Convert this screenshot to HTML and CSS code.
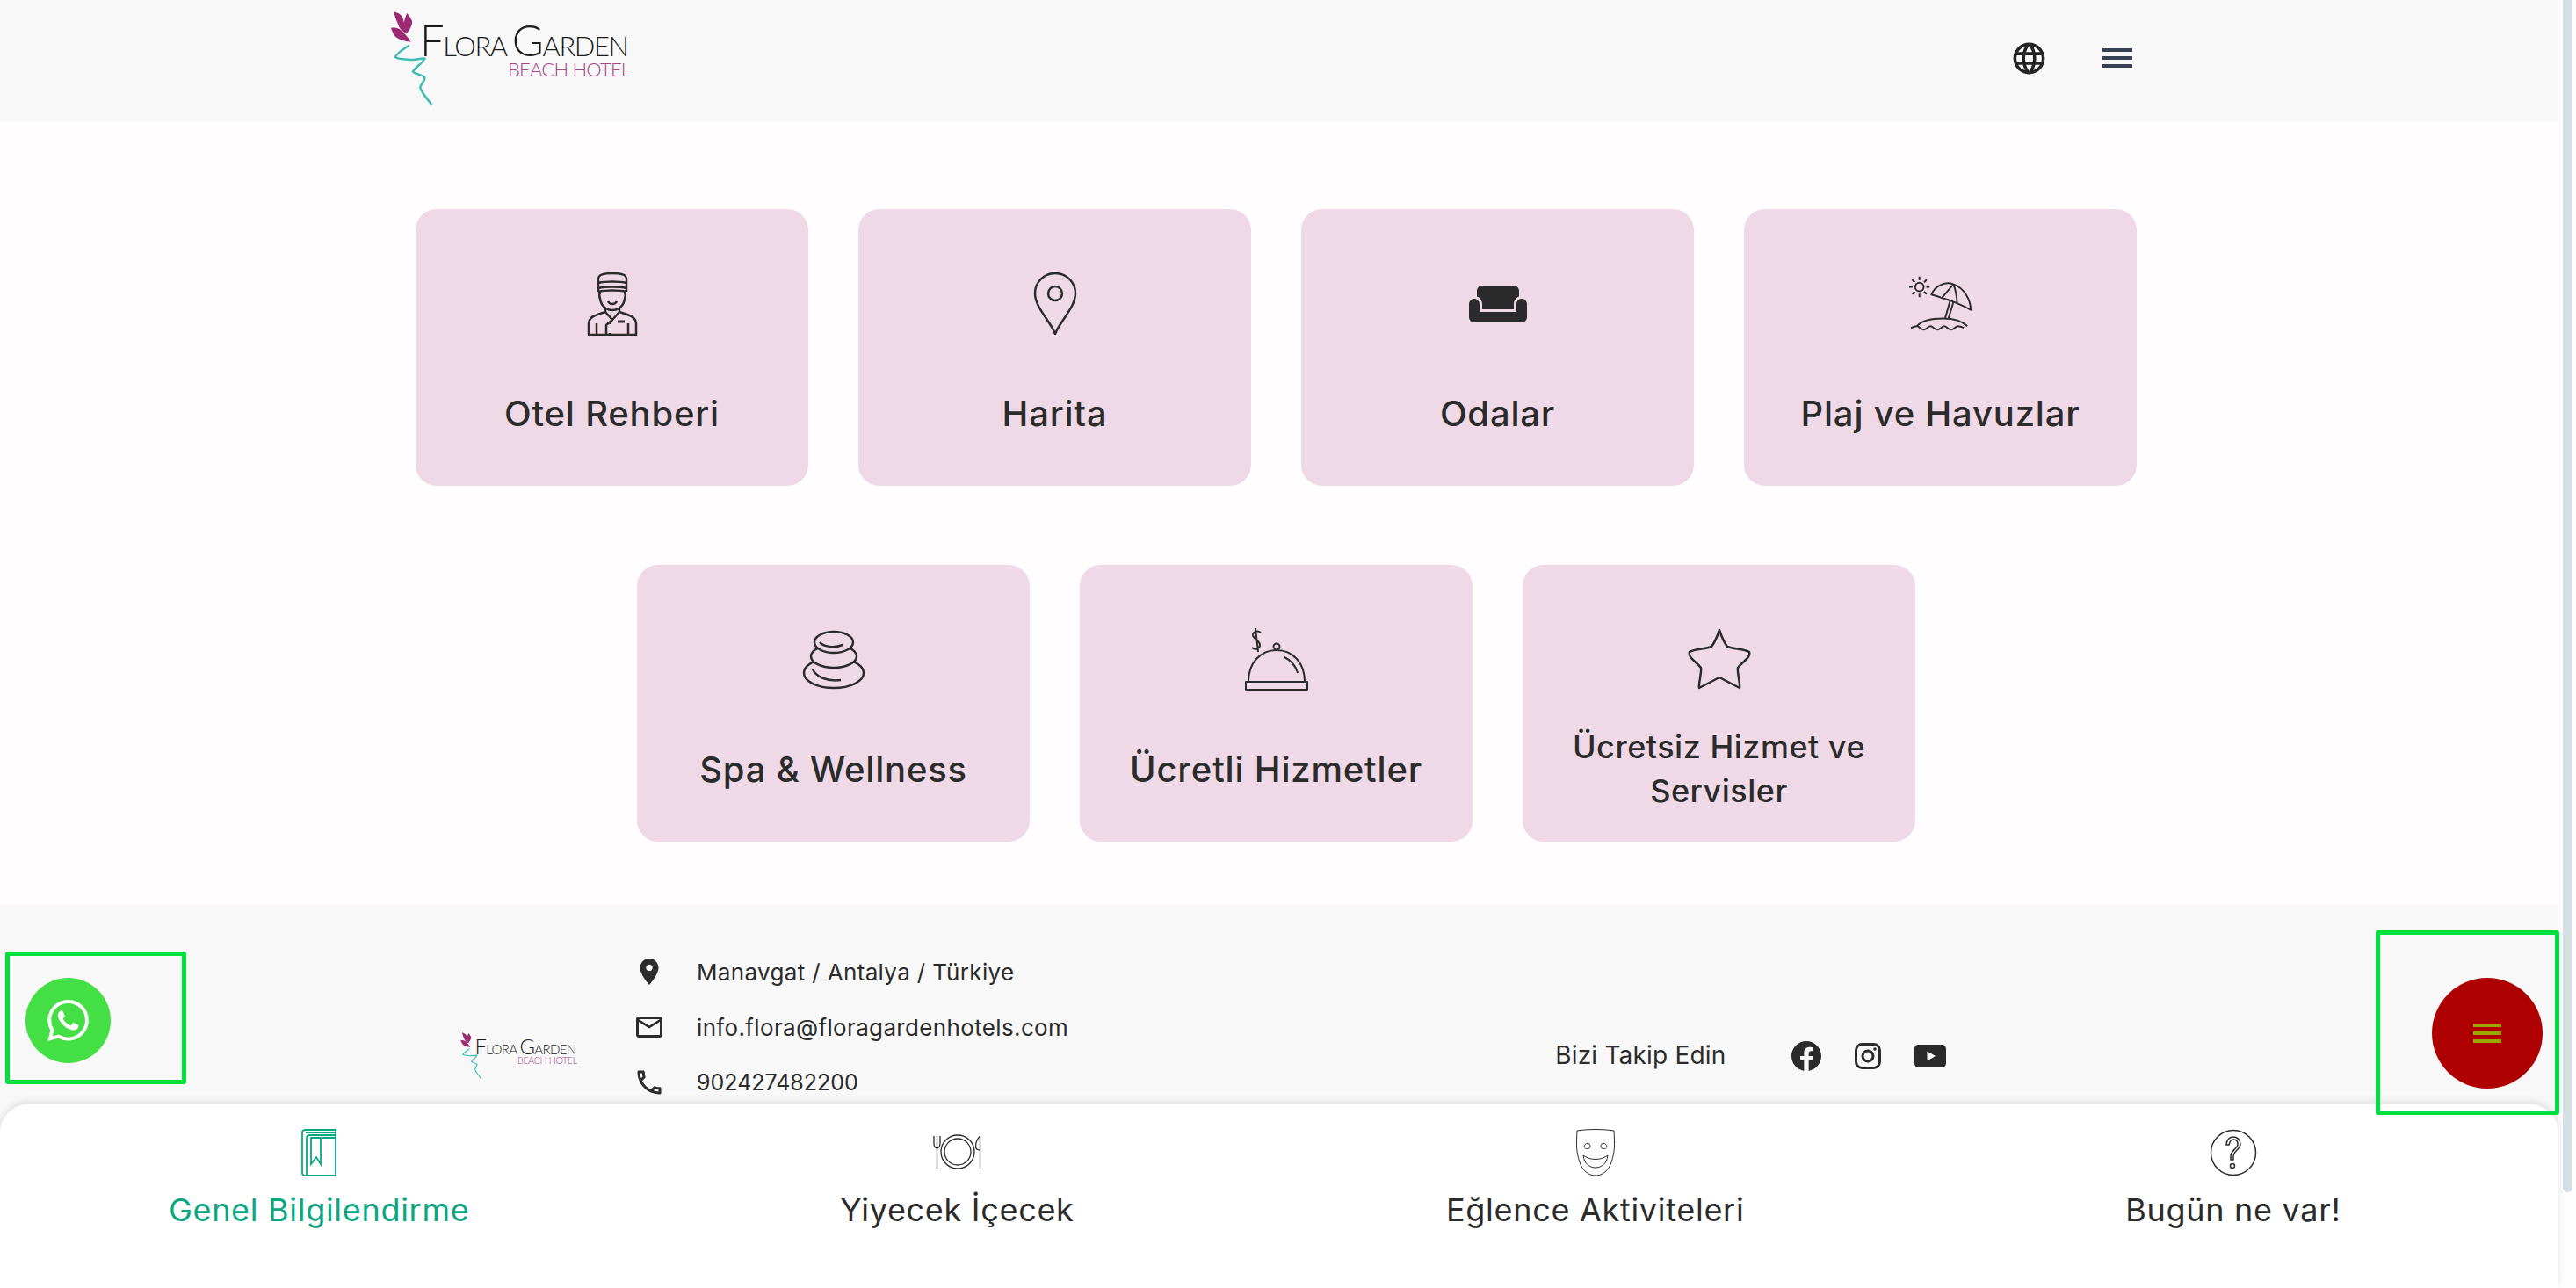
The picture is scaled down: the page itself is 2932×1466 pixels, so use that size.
FILE: index.html
```html
<!DOCTYPE html>
<html lang="tr">
<head>
  <meta charset="UTF-8" />
  <meta name="viewport" content="width=device-width, initial-scale=1.0" />
  <title>Flora Garden Beach Hotel</title>
  <link rel="stylesheet" href="styles.css">
</head>
<body>
  <div class="page">

    <header class="topbar">
      <svg class="logo" viewBox="0 0 274 107">
        <path class="logo-leaf" d="M3.3 .3C9 2 12 4 13.3 7c2 6 3 12 5 18.3C13 23 10 20 8.3 15.3 6 10 4 5 3.3 .3z"/>
        <path class="logo-leaf" d="M18.3 2c2.5 3 5 6 6 10-.5 5-3 9-6 12.7-2-4-3.300-8-3.300-12.700 .5-4 2-7 3.300-10z"/>
        <path class="logo-leaf" d="M0 18.700c4-.5 7 0 10 1.600 5 3.500 9 9 12.700 14.400C15 34 9 32 5 28.700 2.500 26 1 22 0 18.700z"/>
        <path class="logo-wave" d="M20.700 38.700C14 43 7 47 5 52c4 3 12 2 16.700 3 7 0 13-2 16.600-1.300-3 6-11 10-13.300 15 3 3 11 3 13.300 6.300 1 4-5 8-5 11.700 2 7 9 14 13.400 20"/>
        <text class="logo-name" x="33" y="50.500" textLength="238">F<tspan class="logo-small">LORA </tspan>G<tspan class="logo-small">ARDEN</tspan></text>
        <text class="logo-sub" x="133" y="74" textLength="140">BEACH HOTEL</text>
      </svg>
      <div class="topbar-actions">
        <svg class="globe-icon" viewBox="0 0 24 24"><path d="M11.990 2C6.470 2 2 6.480 2 12s4.470 10 9.990 10C17.520 22 22 17.520 22 12S17.520 2 11.990 2zm6.930 6h-2.950c-.32-1.250-.78-2.450-1.380-3.560 1.840.63 3.370 1.910 4.330 3.560zM12 4.040c.83 1.200 1.480 2.530 1.910 3.960h-3.820c.43-1.430 1.080-2.760 1.910-3.960zM4.260 14C4.100 13.360 4 12.690 4 12s.1-1.360.26-2h3.380c-.08.66-.14 1.320-.14 2 0 .68.06 1.340.14 2H4.260zm.82 2h2.950c.32 1.250.78 2.450 1.380 3.560-1.840-.63-3.370-1.900-4.330-3.560zm2.950-8H5.080c.96-1.660 2.490-2.930 4.330-3.560C8.810 5.550 8.350 6.750 8.030 8zM12 19.960c-.83-1.200-1.480-2.530-1.910-3.960h3.820c-.43 1.430-1.080 2.760-1.910 3.960zM14.340 14H9.660c-.09-.66-.16-1.320-.16-2 0-.68.07-1.350.16-2h4.680c.09.65.16 1.320.16 2 0 .68-.07 1.340-.16 2zm.25 5.560c.6-1.110 1.060-2.310 1.380-3.560h2.950c-.96 1.650-2.490 2.930-4.330 3.560zM16.360 14c.08-.66.14-1.320.14-2 0-.68-.06-1.340-.14-2h3.380c.16.64.26 1.310.26 2s-.1 1.360-.26 2h-3.380z"/></svg>
        <div class="burger"><span></span><span></span><span></span></div>
      </div>
    </header>

    <main class="cards">
      <div class="card-row">
        <a class="card">
          <svg class="card-icon line-icon" viewBox="0 0 56 72">
            <path d="M12 22V7c0-4 6-6 16-6s16 2 16 6v15M12 12c8-2 24-2 32 0M12 18c8-2 24-2 32 0M12 22c8-2 24-2 32 0"/>
            <path d="M14 22c-1 3-1 6 0 8 1 8 7 13 14 13s13-5 14-13c1-2 1-5 0-8M23 33c2 4 8 4 10 0"/>
            <path d="M20 41v4l8 9 8-9v-4M20 45l-9 3c-6 2-10 5-10 10v13h54V58c0-5-4-8-10-10l-9-3M10 58v13M46 58v13M28 54l-7 6v11"/>
            <path d="M34 56h8" stroke-width="3"/>
            <path d="M25 58v1M25 64v1M25 69v1" stroke-width="2.500"/>
          </svg>
          <span class="card-label">Otel Rehberi</span>
        </a>
        <a class="card">
          <svg class="card-icon line-icon" viewBox="0 0 50 72">
            <path d="M25 70C20 56 2 40 2 24a23 23 0 0 1 46 0c0 16-18 32-23 46z"/>
            <circle cx="25" cy="24" r="8"/>
          </svg>
          <span class="card-label">Harita</span>
        </a>
        <a class="card">
          <svg class="card-icon fill-icon" viewBox="0 0 24 24"><path d="M21 10c-1.100 0-2 .9-2 2v3H5v-3c0-1.100-.9-2-2-2s-2 .9-2 2v5c0 1.100.9 2 2 2h18c1.100 0 2-.9 2-2v-5c0-1.100-.9-2-2-2zm-3-5H6c-1.100 0-2 .9-2 2v2.150c1.160.41 2 1.520 2 2.810V14h12v-2.040c0-1.290.84-2.400 2-2.810V7c0-1.100-.9-2-2-2z"/></svg>
          <span class="card-label">Odalar</span>
        </a>
        <a class="card">
          <svg class="card-icon line-icon thin" viewBox="0 0 74 66">
            <circle cx="12" cy="13" r="5"/>
            <path d="M12 1v4M12 21v4M0 13h4M20 13h4M3.500 4.500l3 3M17.500 18.500l3 3M3.500 21.500l3-3M17.500 7.500l3-3"/>
            <path d="M26 22C30 12 42 6 52 10c12 4 20 18 20 30-6-4-12-6-16-8-6-2-14-6-18-6-4-2-8-3-12-4z"/>
            <path d="M52 10c-6 6-10 12-14 16M52 10c2 6 4 14 4 22"/>
            <path d="M48 29l-6 21M52 30l-6 20"/>
            <path d="M9 59c5-6 17-9 31-9 12 0 22 3 28 9"/>
            <path d="M2 61c3-1 5-2 7-2 3 0 4 4 8 4s5-4 8-4 4 4 8 4 5-4 8-4 4 4 8 4 5-4 8-4c2 0 5 1 7 2"/>
          </svg>
          <span class="card-label">Plaj ve Havuzlar</span>
        </a>
      </div>
      <div class="card-row">
        <a class="card">
          <svg class="card-icon line-icon stones" viewBox="0 0 72 66">
            <ellipse cx="36" cy="48" rx="34" ry="17"/>
            <path d="M12 44c4 8 16 14 32 12"/>
            <ellipse cx="36" cy="29" rx="26" ry="13"/>
            <ellipse cx="36" cy="13" rx="22" ry="12"/>
            <path d="M20 13c4 5 16 7 26 3"/>
          </svg>
          <span class="card-label">Spa &amp; Wellness</span>
        </a>
        <a class="card">
          <svg class="card-icon line-icon thin" viewBox="0 0 72 72">
            <path d="M1 61h70v9H1z"/>
            <path d="M4 61c0-22 14-36 32-36s32 14 32 36"/>
            <circle cx="36" cy="21" r="3.500"/>
            <path d="M45 33c8 4 13 11 15 18"/>
            <path d="M18 5c-4-3-9-1-9 3s8 6 8 11-6 6-9 3M12 0l3 27"/>
          </svg>
          <span class="card-label">Ücretli Hizmetler</span>
        </a>
        <a class="card">
          <svg class="card-icon line-icon" viewBox="0 0 72 72">
            <path d="M36 2C38 8 41 16 45 21 52 24 64 23 70 27 72 34 62 38 57 45 56 52 60 62 59 68 53 65 42 59 36 56 30 59 19 65 13 68 12 62 16 52 15 45 10 38 0 34 2 27 8 23 20 24 27 21 31 16 34 8 36 2z"/>
          </svg>
          <span class="card-label small">Ücretsiz Hizmet ve Servisler</span>
        </a>
      </div>
    </main>

    <footer class="site-footer">
      <svg class="logo footer-logo" viewBox="0 0 274 107">
        <path class="logo-leaf" d="M3.300 .3C9 2 12 4 13.300 7c2 6 3 12 5 18.300C13 23 10 20 8.300 15.300 6 10 4 5 3.300 .3z"/>
        <path class="logo-leaf" d="M18.300 2c2.500 3 5 6 6 10-.5 5-3 9-6 12.700-2-4-3.300-8-3.300-12.700 .5-4 2-7 3.300-10z"/>
        <path class="logo-leaf" d="M0 18.700c4-.5 7 0 10 1.600 5 3.500 9 9 12.700 14.400C15 34 9 32 5 28.700 2.500 26 1 22 0 18.700z"/>
        <path class="logo-wave" d="M20.700 38.700C14 43 7 47 5 52c4 3 12 2 16.700 3 7 0 13-2 16.600-1.300-3 6-11 10-13.300 15 3 3 11 3 13.300 6.300 1 4-5 8-5 11.700 2 7 9 14 13.400 20"/>
        <text class="logo-name" x="33" y="50.500" textLength="238">F<tspan class="logo-small">LORA </tspan>G<tspan class="logo-small">ARDEN</tspan></text>
        <text class="logo-sub" x="133" y="74" textLength="140">BEACH HOTEL</text>
      </svg>

      <div class="contact">
        <div class="contact-row">
          <svg viewBox="0 0 24 24"><path d="M12 2C8.130 2 5 5.130 5 9c0 5.250 7 13 7 13s7-7.750 7-13c0-3.870-3.130-7-7-7zm0 9.500c-1.380 0-2.500-1.120-2.500-2.500s1.120-2.500 2.500-2.500 2.500 1.120 2.500 2.500-1.120 2.500-2.500 2.500z"/></svg>
          <span>Manavgat / Antalya / Türkiye</span>
        </div>
        <div class="contact-row">
          <svg viewBox="0 0 24 24"><path d="M20 4H4c-1.100 0-1.990.9-1.990 2L2 18c0 1.100.9 2 2 2h16c1.100 0 2-.9 2-2V6c0-1.100-.9-2-2-2zm0 14H4V8l8 5 8-5v10zm-8-7L4 6h16l-8 5z"/></svg>
          <span>info.flora@floragardenhotels.com</span>
        </div>
        <div class="contact-row">
          <svg viewBox="0 0 24 24"><path d="M6.540 5c.06.89.21 1.760.45 2.590l-1.200 1.200c-.41-1.200-.67-2.470-.76-3.790h1.510m9.860 12.020c.85.24 1.720.39 2.600.45v1.490c-1.320-.09-2.590-.35-3.800-.75l1.200-1.190M7.500 3H4c-.55 0-1 .45-1 1 0 9.390 7.610 17 17 17 .55 0 1-.45 1-1v-3.490c0-.55-.45-1-1-1-1.240 0-2.450-.2-3.570-.57-.1-.04-.21-.05-.31-.05-.26 0-.51.1-.71.29l-2.200 2.200c-2.830-1.450-5.150-3.760-6.590-6.590l2.200-2.200c.28-.28.36-.67.25-1.020C8.700 6.450 8.500 5.250 8.500 4c0-.55-.45-1-1-1z"/></svg>
          <span class="phone">902427482200</span>
        </div>
      </div>

      <div class="follow">
        <span class="follow-text">Bizi Takip Edin</span>
        <div class="follow-icons">
          <svg class="fb" viewBox="0 0 24 24"><path d="M24 12.073c0-6.627-5.373-12-12-12s-12 5.373-12 12c0 5.990 4.388 10.954 10.125 11.854v-8.385H7.078v-3.470h3.047V9.430c0-3.007 1.792-4.669 4.533-4.669 1.312 0 2.686.235 2.686.235v2.953H15.830c-1.491 0-1.956.925-1.956 1.874v2.250h3.328l-.532 3.470h-2.796v8.385C19.612 23.027 24 18.062 24 12.073z"/></svg>
          <svg class="ig" viewBox="0 0 30 30"><rect class="ig-line" x="1.500" y="1.500" width="27" height="27" rx="7"/><circle class="ig-line" cx="15" cy="15" r="6"/><circle cx="23" cy="7" r="1.800"/></svg>
          <svg class="yt" viewBox="0 0 36 26"><path fill-rule="evenodd" d="M5 0h26c3 0 5 2 5 5v16c0 3-2 5-5 5H5c-3 0-5-2-5-5V5c0-3 2-5 5-5zm9.500 7.500v11l9.500-5.500z"/></svg>
        </div>
      </div>
    </footer>

    <nav class="bottom-nav">
      <a class="nav-item active">
        <svg class="nav-icon book" viewBox="0 0 40 54">
          <path d="M39 1H5C2 1 1 2 1 4v46c0 2 1 3 4 3h34zM39 7H10c-3 0-4 1-4 3v43M39 4H5M39 10H24"/>
          <path d="M11 10h11v30l-5-8-6 8z"/>
        </svg>
        <span>Genel Bilgilendirme</span>
      </a>
      <a class="nav-item">
        <svg class="nav-icon cutlery" viewBox="0 0 55 38">
          <circle cx="28" cy="18" r="19"/>
          <circle cx="28" cy="18" r="15"/>
          <path d="M1 0v9c0 3 2 5 3.500 5S8 12 8 9V0M4.500 0v37M53.500 37V0c-3 3-5 8-5 12 0 3 2 4 5 4"/>
        </svg>
        <span>Yiyecek İçecek</span>
      </a>
      <a class="nav-item">
        <svg class="nav-icon mask" viewBox="0 0 44 54">
          <path d="M1 2c14-2 28-2 42 0 1 16 1 24-3 36-3 9-10 15-18 15S7 47 4 38C0 26 0 18 1 2z"/>
          <path d="M9 20c1-5 7-5 7 0 0 3-6 4-7 0zM35 20c-1-5-7-5-7 0 0 3 6 4 7 0z"/>
          <path d="M8 30c8 6 20 6 28 0-1 10-8 14-14 14S9 40 8 30z"/>
        </svg>
        <span>Eğlence Aktiviteleri</span>
      </a>
      <a class="nav-item">
        <svg class="nav-icon help" viewBox="0 0 54 54">
          <circle cx="27" cy="27" r="25.500"/>
          <path d="M19 18c0-6 4-9 8-9s8 3 8 8c0 7-8 7-8 15v3h-3v-4c0-7 8-8 8-14 0-3-2-5-5-5s-4 2-5 6z"/>
          <circle cx="26" cy="42" r="2.500"/>
        </svg>
        <span>Bugün ne var!</span>
      </a>
    </nav>

    <div class="fab-box whatsapp-box">
      <a class="fab whatsapp">
        <svg viewBox="0 0 24 24"><path d="M17.472 14.382c-.297-.149-1.758-.867-2.030-.967-.273-.099-.471-.148-.67.15-.197.297-.767.966-.94 1.164-.173.199-.347.223-.644.075-.297-.15-1.255-.463-2.390-1.475-.883-.788-1.480-1.761-1.653-2.059-.173-.297-.018-.458.13-.606.134-.133.298-.347.446-.52.149-.174.198-.298.298-.497.099-.198.05-.371-.025-.52-.075-.149-.669-1.612-.916-2.207-.242-.579-.487-.5-.669-.51-.173-.008-.371-.01-.57-.01-.198 0-.52.074-.792.372-.272.297-1.040 1.016-1.040 2.479 0 1.462 1.065 2.875 1.213 3.074.149.198 2.096 3.200 5.077 4.487.709.306 1.262.489 1.694.625.712.227 1.360.195 1.871.118.571-.085 1.758-.719 2.006-1.413.248-.694.248-1.289.173-1.413-.074-.124-.272-.198-.57-.347m-5.421 7.403h-.004a9.870 9.870 0 01-5.031-1.378l-.361-.214-3.741.982.998-3.648-.235-.374a9.860 9.860 0 01-1.510-5.260c.001-5.450 4.436-9.884 9.888-9.884 2.640 0 5.122 1.030 6.988 2.898a9.825 9.825 0 012.893 6.994c-.003 5.450-4.437 9.884-9.885 9.884m8.413-18.297A11.815 11.815 0 0012.050 0C5.495 0 .16 5.335.157 11.892c0 2.096.547 4.142 1.588 5.945L.057 24l6.305-1.654a11.882 11.882 0 005.683 1.448h.005c6.554 0 11.890-5.335 11.893-11.893a11.821 11.821 0 00-3.480-8.413z"/></svg>
      </a>
    </div>

    <div class="fab-box menu-box">
      <a class="fab menu-fab">
        <div class="burger"><span></span><span></span><span></span></div>
      </a>
    </div>

    <div class="scrollbar"></div>
  </div>
</body>
</html>
```

FILE: styles.css
```css
* {
  box-sizing: border-box;
}

body {
  margin: 0;
  font-family: "Inter", "Noto Sans", sans-serif;
  color: #2b2b2b;
  background-color: #fdfdfd;
}

.page {
  position: relative;
  width: 2932px;
  height: 1466px;
  padding-right: 20px;
  display: flex;
  flex-direction: column;
  overflow: hidden;
}

/* top bar */
.topbar {
  flex: none;
  height: 139px;
  padding: 13px 485px 0 445px;
  background-color: #f8f8f8;
  display: flex;
  justify-content: space-between;
  align-items: flex-start;
}

.logo {
  width: 274px;
  height: 107px;
  flex: none;
  overflow: visible;
}

.logo-leaf {
  fill: #9b2a73;
}

.logo-wave {
  fill: none;
  stroke: #3fbdb5;
  stroke-width: 2.500;
}

.logo-name {
  font-family: "Lato", sans-serif;
  font-weight: 300;
  font-size: 49px;
  fill: #1c1c1c;
}

.logo-small {
  font-size: 31px;
}

.logo-sub {
  font-family: "Lato", sans-serif;
  font-weight: 300;
  font-size: 22px;
  fill: #a8468c;
}

.topbar-actions {
  display: flex;
  align-items: center;
  gap: 62px;
  height: 106px;
}

.globe-icon {
  width: 43px;
  height: 43px;
  fill: #242424;
}

.burger {
  display: flex;
  flex-direction: column;
  gap: 5px;
  width: 34px;
}

.burger span {
  display: block;
  height: 4px;
  background-color: #374151;
}

/* cards */
.cards {
  flex: none;
  height: 891px;
  padding: 99px 7px 0 0;
  background-color: #fffdfe;
  display: flex;
  flex-direction: column;
  gap: 90px;
}

.card-row {
  display: flex;
  justify-content: center;
  gap: 56.500px;
}

.card {
  width: 447.500px;
  height: 315px;
  padding: 72px 16px 0;
  background-color: #f0d9e6;
  border-radius: 24px;
  display: flex;
  flex-direction: column;
  align-items: center;
}

.card-icon {
  flex: none;
  width: 72px;
  height: 72px;
}

.line-icon {
  fill: none;
  stroke: #2b2b2b;
  stroke-width: 2.500;
  stroke-linejoin: round;
}

.line-icon.thin {
  stroke-width: 2;
}

.stones ellipse {
  fill: #f0d9e6;
}

.fill-icon {
  fill: #2b2b2b;
  width: 72px;
}

.card-label {
  flex: 1;
  padding-top: 5px;
  display: flex;
  align-items: center;
  text-align: center;
  font-size: 40px;
  font-weight: 500;
  letter-spacing: 0.8px;
}

.card-label.small {
  font-size: 36px;
  line-height: 50px;
  letter-spacing: 0.5px;
}

/* footer */
.site-footer {
  flex: none;
  height: 260px;
  padding-left: 524px;
  background-color: #f8f8f8;
  display: flex;
  align-items: flex-start;
}

.footer-logo {
  width: 134px;
  height: 52px;
  margin-top: 145px;
}

.contact {
  margin-left: 63px;
  padding-top: 58px;
  display: flex;
  flex-direction: column;
  gap: 27px;
}

.contact-row {
  display: flex;
  align-items: center;
  gap: 36px;
  height: 36px;
  font-size: 26px;
  letter-spacing: 0.350px;
}

.contact-row .phone {
  font-size: 25px;
  letter-spacing: 0;
}

.contact-row svg {
  width: 36px;
  height: 36px;
  fill: #2b2b2b;
}

.follow {
  margin-left: 554px;
  margin-top: 155px;
  display: flex;
  align-items: center;
  gap: 74px;
  font-size: 28px;
  letter-spacing: 0.2px;
}

.follow-text {
  margin-top: -3px;
}

.follow-icons {
  display: flex;
  align-items: center;
  gap: 38px;
  fill: #2b2b2b;
}

.fb {
  width: 34px;
  height: 34px;
}

.ig {
  width: 30px;
  height: 30px;
}

.ig-line {
  fill: none;
  stroke: #2b2b2b;
  stroke-width: 3;
}

.yt {
  width: 36px;
  height: 26px;
}

/* bottom nav */
.bottom-nav {
  flex: none;
  height: 209px;
  margin-top: -33px;
  padding-right: 7px;
  background-color: #fff;
  border-radius: 32px 32px 0 0;
  box-shadow: 0 -3px 10px rgba(0, 0, 0, 0.1);
  display: grid;
  grid-template-columns: repeat(4, 1fr);
  position: relative;
}

.nav-item {
  padding-top: 28px;
  display: flex;
  flex-direction: column;
  align-items: center;
  font-size: 36px;
  letter-spacing: 0.7px;
  color: #2b2b2b;
}

.nav-item.active {
  color: #0aa882;
}

.nav-icon {
  height: 54px;
  margin-bottom: 16px;
  fill: none;
  stroke: currentColor;
  stroke-width: 1.300;
  overflow: visible;
}

.nav-icon.book {
  width: 40px;
  stroke-width: 1.800;
}

.nav-icon.cutlery {
  width: 55px;
}

.nav-icon.mask {
  width: 44px;
  stroke-width: 1;
}

.nav-icon.help {
  width: 54px;
  stroke-width: 1.500;
}

/* floating buttons in their green frames */
.fab-box {
  position: absolute;
  border: 5px solid #00e03c;
  border-radius: 3px;
  display: flex;
  align-items: center;
  z-index: 2;
}

.whatsapp-box {
  left: 6px;
  top: 1083px;
  width: 206px;
  height: 151px;
  padding: 5px 0 0 18px;
}

.menu-box {
  left: 2704px;
  top: 1059px;
  width: 209px;
  height: 210px;
  padding: 24px 14px 0 0;
  justify-content: flex-end;
}

.fab {
  border-radius: 50%;
  display: flex;
  align-items: center;
  justify-content: center;
}

.whatsapp {
  width: 97px;
  height: 97px;
  background-color: #44de45;
}

.whatsapp svg {
  width: 47px;
  height: 47px;
  fill: #fff;
}

.menu-fab {
  width: 126px;
  height: 126px;
  background-color: #ae0000;
}

.menu-fab .burger {
  width: 32px;
}

.menu-fab .burger span {
  background-color: #9aaa00;
}

/* custom page scrollbar */
.scrollbar {
  position: absolute;
  top: 0;
  right: 4px;
  width: 11px;
  height: 1357px;
  border-radius: 0 0 6px 6px;
  background-color: #d5dee2;
}
```
